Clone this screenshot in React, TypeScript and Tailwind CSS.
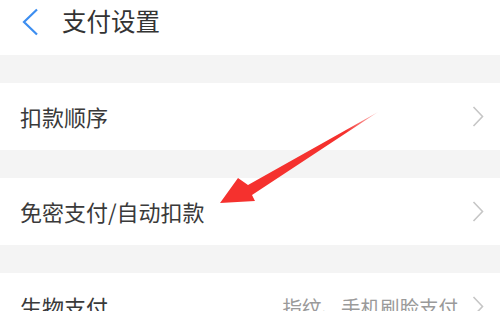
const font = { fontFamily: '"Noto Sans CJK SC", "Noto Sans", sans-serif' };

function Chevron() {
  return (
    <svg width="12" height="21" viewBox="0 0 12 21" fill="none" className="shrink-0">
      <polyline points="1.5,1 10.5,10.5 1.5,20" stroke="#c6c6c6" strokeWidth="1.6" />
    </svg>
  );
}

function Row({ title, value }: { title: string; value?: string }) {
  return (
    <div className="flex h-[67px] items-center bg-white pl-5 pr-[16px]">
      <span className="flex-1 text-[22px] text-[#3a3a3a]">{title}</span>
      {value && <span className="mr-[14px] text-[19.5px] text-[#9a9a9a]">{value}</span>}
      <Chevron />
    </div>
  );
}

export default function App() {
  return (
    <div className="relative h-[311px] w-[500px] overflow-hidden bg-[#f4f4f4]" style={font}>
      <header className="flex h-[55px] items-center bg-white pb-[12px] pl-[22px]">
        <svg width="17" height="28" viewBox="0 0 17 28" fill="none" className="shrink-0">
          <polyline points="15,1.5 2,14 15,26.5" stroke="#3d8ef0" strokeWidth="2.2" />
        </svg>
        <h1 className="ml-[23px] text-[24.5px] leading-none text-[#333]">支付设置</h1>
      </header>

      <div className="mt-[28px] flex flex-col gap-[28px]">
        <Row title="扣款顺序" />
        <Row title="免密支付/自动扣款" />
        <Row title="生物支付" value="指纹、手机刷脸支付" />
      </div>

      {/* annotation arrow */}
      <svg className="pointer-events-none absolute left-0 top-0" width="500" height="311" viewBox="0 0 500 311">
        <defs>
          <linearGradient id="fade" x1="378" y1="112" x2="250" y2="190" gradientUnits="userSpaceOnUse">
            <stop offset="0" stopColor="#f5312e" stopOpacity="0.3" />
            <stop offset="0.25" stopColor="#f5312e" />
            <stop offset="1" stopColor="#f5312e" />
          </linearGradient>
        </defs>
        <polygon points="220,203 238,178 248,185 378,112 252,195 255,201" fill="url(#fade)" />
      </svg>
    </div>
  );
}
